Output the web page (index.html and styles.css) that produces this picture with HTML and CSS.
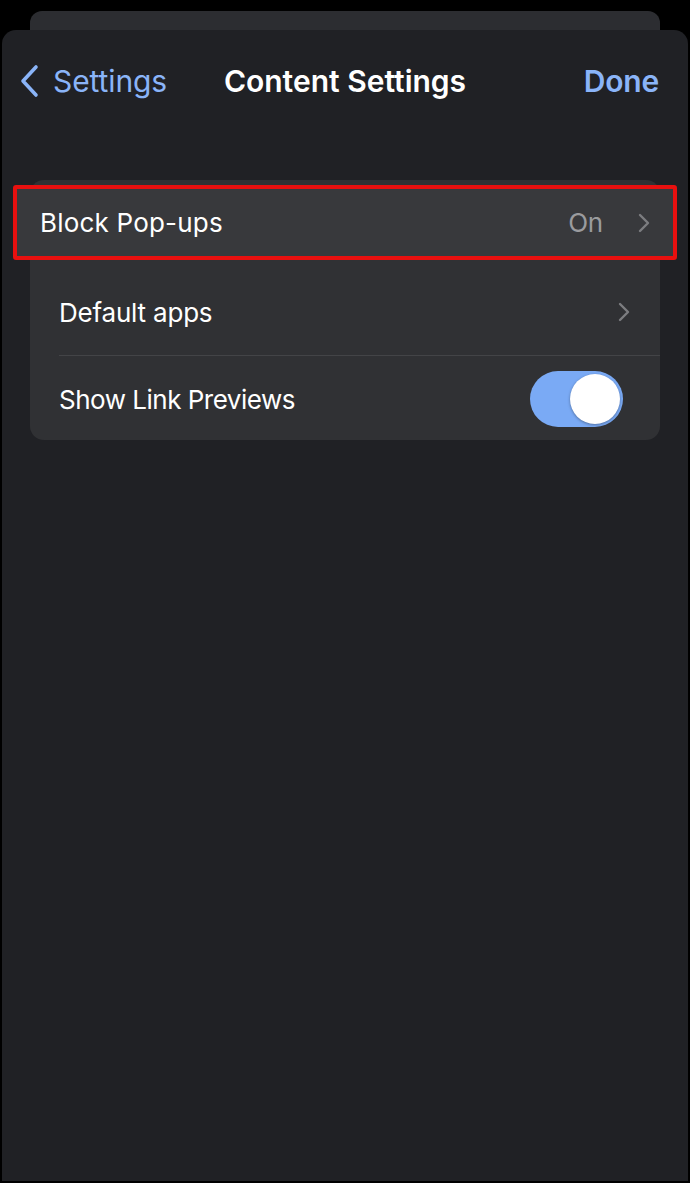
FILE: index.html
```html
<!DOCTYPE html>
<html>
<head>
<meta charset="utf-8">
<link rel="stylesheet" href="styles.css">
</head>
<body>
<div class="stack-back"></div>
<div class="sheet">
  <header class="nav">
    <div class="back">
      <svg class="back-chev" width="22" height="34" viewBox="0 0 22 34"><path d="M18 3 L5 17 L18 31" fill="none" stroke="#8ab4f8" stroke-width="3.6" stroke-linecap="round" stroke-linejoin="round"/></svg>
      <span class="back-label">Settings</span>
    </div>
    <h1 class="title">Content Settings</h1>
    <span class="done">Done</span>
  </header>
  <section class="group">
    <div class="row row-highlight">
      <span class="label">Block Pop-ups</span>
      <span class="value">On</span>
      <svg class="chev" width="12" height="20" viewBox="0 0 12 20"><path d="M2 2 L10 10 L2 18" fill="none" stroke="#7c7d80" stroke-width="2.4" stroke-linecap="round" stroke-linejoin="round"/></svg>
    </div>
    <div class="row row-plain">
      <span class="label">Default apps</span>
      <svg class="chev" width="12" height="20" viewBox="0 0 12 20"><path d="M2 2 L10 10 L2 18" fill="none" stroke="#7c7d80" stroke-width="2.4" stroke-linecap="round" stroke-linejoin="round"/></svg>
    </div>
    <div class="row row-plain row-last">
      <span class="label">Show Link Previews</span>
      <span class="toggle"><span class="knob"></span></span>
    </div>
  </section>
</div>
</body>
</html>
```

FILE: styles.css
```css
html, body {
  margin: 0;
  padding: 0;
  background: #000;
  height: 1183px;
  overflow: hidden;
  font-family: "Inter", "Roboto", "Liberation Sans", sans-serif;
}
.stack-back {
  margin: 11px 30px 0 30px;
  height: 30px;
  background: #2c2d31;
  border-radius: 12px 12px 0 0;
}
.sheet {
  margin: -11px 2px 0 2px;
  height: 1150px;
  background: #202125;
  border-radius: 14px 14px 0 0;
  position: relative;
  padding-top: 1px;
}
.nav {
  display: flex;
  align-items: center;
  justify-content: space-between;
  height: 50px;
  margin-top: 25px;
  padding: 0 29px 0 16px;
  position: relative;
}
.back {
  display: flex;
  align-items: center;
  gap: 13px;
}
.back-label {
  color: #8ab4f8;
  font-size: 30px;
  letter-spacing: -0.1px;
}
.title {
  position: absolute;
  left: 0;
  right: 0;
  text-align: center;
  margin: 0;
  color: #fff;
  font-size: 30px;
  font-weight: 600;
  letter-spacing: 0;
  pointer-events: none;
}
.done {
  color: #8ab4f8;
  font-size: 30px;
  font-weight: 600;
  letter-spacing: -0.2px;
}
.group {
  margin: 74px 28px 0 28px;
  background: #303134;
  border-radius: 14px;
  height: 260px;
}
.row {
  display: flex;
  align-items: center;
  color: #fff;
  font-size: 26px;
  letter-spacing: -0.2px;
}
.label { flex: 1; }
.row-highlight {
  margin: 0 -17px 0 -17px;
  position: relative;
  top: 5px;
  height: 67px;
  border: 4px solid #e8100f;
  border-radius: 3px;
  padding: 0 23px 0 23px;
  background: #38393c;
}
.row-highlight .label { letter-spacing: 0.2px; }
.value {
  color: #9a9b9e;
  font-size: 26px;
  margin-right: 35px;
}
.row-plain {
  margin-left: 29px;
  padding-right: 30px;
  height: 86px;
  border-bottom: 1px solid #434447;
}
.row-highlight + .row-plain {
  margin-top: 8px;
  height: 93px;
  padding-top: 6px;
  box-sizing: border-box;
}
.row-last {
  border-bottom: none;
  padding-right: 37px;
}
.row-last .label { letter-spacing: -0.5px; }
.toggle {
  width: 93px;
  height: 56px;
  border-radius: 28px;
  background: #7aaaf5;
  display: flex;
  align-items: center;
  justify-content: flex-end;
  padding-right: 3px;
  box-sizing: border-box;
}
.knob {
  width: 50px;
  height: 50px;
  border-radius: 50%;
  background: #fff;
  box-shadow: 0 1px 3px rgba(0,0,0,0.35);
}
```
